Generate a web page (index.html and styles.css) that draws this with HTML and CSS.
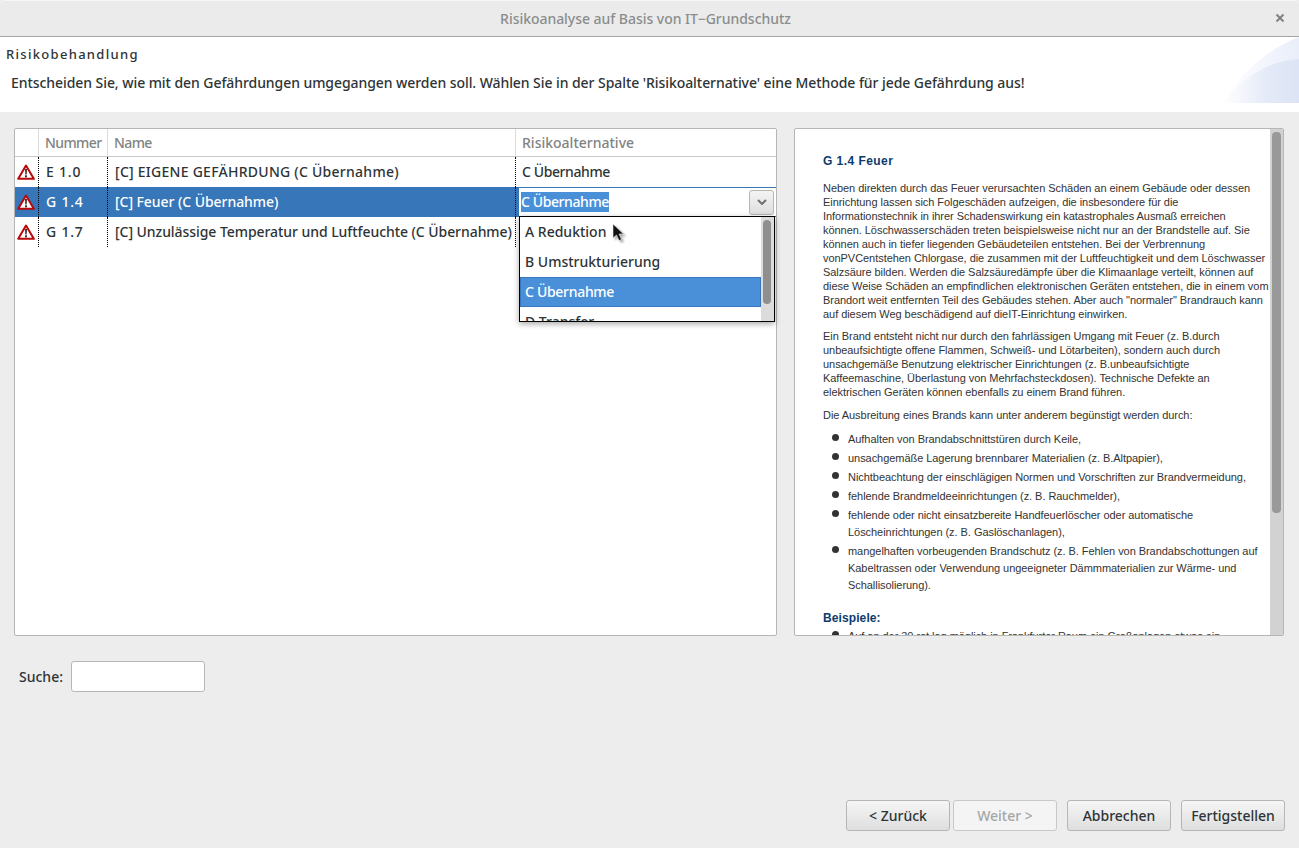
FILE: index.html
```html
<!DOCTYPE html>
<html lang="de">

<head>
    <meta charset="UTF-8">
    <title>Risikoanalyse auf Basis von IT-Grundschutz</title>
    <link rel="stylesheet" href="styles.css">
</head>

<body>
    <div class="window">
        <div class="titlebar">
            <span class="title">Risikoanalyse auf Basis von IT−Grundschutz</span>
            <svg class="close" width="10" height="10" viewBox="0 0 10 10">
                <path d="M1.5 1.5 L8.5 8.5 M8.5 1.5 L1.5 8.5" stroke="#7f8282" stroke-width="2" fill="none"/>
            </svg>
        </div>

        <div class="banner">
            <svg class="banner-art" width="76" height="66" viewBox="0 0 76 66">
                <defs>
                    <linearGradient id="fadeA" x1="0" y1="0" x2="1" y2="0">
                        <stop offset="0" stop-color="#ffffff"/>
                        <stop offset="1" stop-color="#e9eefa"/>
                    </linearGradient>
                    <linearGradient id="fadeB" x1="0" y1="0" x2="1" y2="0">
                        <stop offset="0" stop-color="#ffffff"/>
                        <stop offset="0.6" stop-color="#e3e9f7"/>
                        <stop offset="1" stop-color="#dce4f6"/>
                    </linearGradient>
                </defs>
                <path d="M0 66 C18 36 44 12 76 0 L76 66 Z" fill="url(#fadeA)"/>
                <path d="M0 66 C18 42 44 24 76 22 L76 66 Z" fill="url(#fadeB)"/>
            </svg>
            <h1>Risikobehandlung</h1>
            <p>Entscheiden Sie, wie mit den Gefährdungen umgegangen werden soll. Wählen Sie in der Spalte 'Risikoalternative' eine Methode für jede Gefährdung aus!</p>
        </div>

        <div class="panels">
            <div class="panel table-panel">
                <table class="threats">
                    <colgroup>
                        <col class="col-icon">
                        <col class="col-num">
                        <col class="col-name">
                        <col>
                    </colgroup>
                    <thead>
                        <tr>
                            <th></th>
                            <th class="tight">Nummer</th>
                            <th class="tight">Name</th>
                            <th>Risikoalternative</th>
                        </tr>
                    </thead>
                    <tbody>
                        <tr>
                            <td class="icon-cell">
                                <svg width="18" height="16" viewBox="0 0 18 16"><use href="#warn"/></svg>
                            </td>
                            <td class="num-cell">E 1.0</td>
                            <td class="caps-cell">[C] EIGENE GEFÄHRDUNG (C Übernahme)</td>
                            <td class="alt-cell">C Übernahme</td>
                        </tr>
                        <tr class="selected">
                            <td class="icon-cell">
                                <svg width="18" height="16" viewBox="0 0 18 16"><use href="#warn"/></svg>
                            </td>
                            <td class="num-cell">G 1.4</td>
                            <td>[C] Feuer (C Übernahme)</td>
                            <td class="editor-cell">
                                <div class="combo">
                                    <span class="combo-text">C Übernahme</span>
                                    <span class="combo-btn">
                                        <svg width="10" height="6" viewBox="0 0 10 6">
                                            <path d="M1 1 L5 5 L9 1" stroke="#6e7272" stroke-width="2" fill="none"/>
                                        </svg>
                                    </span>
                                </div>
                            </td>
                        </tr>
                        <tr>
                            <td class="icon-cell">
                                <svg width="18" height="16" viewBox="0 0 18 16"><use href="#warn"/></svg>
                            </td>
                            <td class="num-cell">G 1.7</td>
                            <td>[C] Unzulässige Temperatur und Luftfeuchte (C Übernahme)</td>
                            <td></td>
                        </tr>
                    </tbody>
                </table>

                <div class="dropdown">
                    <ul class="dropdown-list">
                        <li>A Reduktion</li>
                        <li>B Umstrukturierung</li>
                        <li class="current">C Übernahme</li>
                        <li>D Transfer</li>
                    </ul>
                    <div class="dropdown-scroll"><div class="dropdown-thumb"></div></div>
                </div>

                <svg class="cursor" width="14" height="20" viewBox="0 0 14 20">
                    <path d="M1 1 L1 15 L4.5 12 L7 17.5 L9.5 16.5 L7 11 L11.5 11 Z" fill="#111" stroke="#eee" stroke-width="0.6"/>
                </svg>
            </div>

            <div class="panel doc-panel">
                <div class="doc">
                    <h2>G 1.4 Feuer</h2>
                    <p>Neben direkten durch das Feuer verursachten Schäden an einem Gebäude oder dessen<br>
                    Einrichtung lassen sich Folgeschäden aufzeigen, die insbesondere für die<br>
                    Informationstechnik in ihrer Schadenswirkung ein katastrophales Ausmaß erreichen<br>
                    können. Löschwasserschäden treten beispielsweise nicht nur an der Brandstelle auf. Sie<br>
                    können auch in tiefer liegenden Gebäudeteilen entstehen. Bei der Verbrennung<br>
                    vonPVCentstehen Chlorgase, die zusammen mit der Luftfeuchtigkeit und dem Löschwasser<br>
                    Salzsäure bilden. Werden die Salzsäuredämpfe über die Klimaanlage verteilt, können auf<br>
                    diese Weise Schäden an empfindlichen elektronischen Geräten entstehen, die in einem vom<br>
                    Brandort weit entfernten Teil des Gebäudes stehen. Aber auch "normaler" Brandrauch kann<br>
                    auf diesem Weg beschädigend auf dieIT-Einrichtung einwirken.</p>
                    <p>Ein Brand entsteht nicht nur durch den fahrlässigen Umgang mit Feuer (z. B.durch<br>
                    unbeaufsichtigte offene Flammen, Schweiß- und Lötarbeiten), sondern auch durch<br>
                    unsachgemäße Benutzung elektrischer Einrichtungen (z. B.unbeaufsichtigte<br>
                    Kaffeemaschine, Überlastung von Mehrfachsteckdosen). Technische Defekte an<br>
                    elektrischen Geräten können ebenfalls zu einem Brand führen.</p>
                    <p class="lead">Die Ausbreitung eines Brands kann unter anderem begünstigt werden durch:</p>
                    <ul>
                        <li>Aufhalten von Brandabschnittstüren durch Keile,</li>
                        <li>unsachgemäße Lagerung brennbarer Materialien (z. B.Altpapier),</li>
                        <li>Nichtbeachtung der einschlägigen Normen und Vorschriften zur Brandvermeidung,</li>
                        <li>fehlende Brandmeldeeinrichtungen (z. B. Rauchmelder),</li>
                        <li>fehlende oder nicht einsatzbereite Handfeuerlöscher oder automatische<br>
                        Löscheinrichtungen (z. B. Gaslöschanlagen),</li>
                        <li>mangelhaften vorbeugenden Brandschutz (z. B. Fehlen von Brandabschottungen auf<br>
                        Kabeltrassen oder Verwendung ungeeigneter Dämmmaterialien zur Wärme- und<br>
                        Schallisolierung).</li>
                    </ul>
                    <h3>Beispiele:</h3>
                    <ul>
                        <li>Auf an der 30 rot lag möglich in Frankfurter Raum ein Großanlagen etwas ein</li>
                    </ul>
                </div>
                <div class="doc-scroll"><div class="doc-thumb"></div></div>
            </div>
        </div>

        <div class="search">
            <label for="suche">Suche:</label>
            <input type="text" id="suche">
        </div>

        <div class="buttons">
            <div class="nav-buttons">
                <button>&lt; Zurück</button>
                <button disabled>Weiter &gt;</button>
            </div>
            <button>Abbrechen</button>
            <button>Fertigstellen</button>
        </div>
    </div>

    <svg class="defs" width="0" height="0">
        <symbol id="warn" viewBox="0 0 18 16">
            <path d="M9 1.5 L16.8 14.8 L1.2 14.8 Z" fill="#fff" stroke="#b80808" stroke-width="2" stroke-linejoin="round"/>
            <path d="M8 5 H10 L9.7 10.5 H8.3 Z" fill="#4a2a2a"/>
            <rect x="8" y="11.3" width="2" height="2" fill="#4a2a2a"/>
        </symbol>
    </svg>
</body>

</html>
```

FILE: styles.css
```css
* {
    box-sizing: border-box;
}

body {
    margin: 0;
    background-color: #ededed;
    color: #2e3436;
    font-family: "Noto Sans", sans-serif;
    font-size: 14px;
}

.window {
    display: flex;
    flex-direction: column;
    height: 848px;
    overflow: hidden;
}

.defs {
    position: absolute;
}

/* title bar */
.titlebar {
    display: flex;
    align-items: center;
    justify-content: center;
    position: relative;
    height: 37px;
    padding-right: 8px;
    border-bottom: 1px solid #a5a5a5;
    border-top: 1px solid #f6f6f6;
    border-radius: 5px 5px 0 0;
    background-color: #ebebeb;
}

.title {
    color: #8a8d8d;
    font-weight: 500;
    font-size: 14px;
    letter-spacing: -0.04px;
}

.close {
    position: absolute;
    right: 14px;
    top: 12px;
}

/* white header */
.banner {
    position: relative;
    height: 75px;
    background-color: #fff;
}

.banner-art {
    position: absolute;
    right: 0;
    top: 0;
}

.banner h1 {
    margin: 0;
    padding: 8px 0 0 6px;
    font-size: 13px;
    font-weight: 500;
    line-height: 18px;
    letter-spacing: 1.3px;
}

.banner p {
    margin: 0;
    padding: 10px 0 0 11px;
    font-size: 14px;
    font-weight: 500;
    letter-spacing: -0.067px;
    line-height: 19px;
    position: relative;
}

/* the two panels */
.panels {
    display: flex;
    gap: 17px;
    padding: 16px 15px 0 14px;
}

.panel {
    position: relative;
    height: 508px;
    border: 1px solid #b6b6b3;
    border-radius: 2px;
    background-color: #fff;
}

.table-panel {
    width: 763px;
}

.doc-panel {
    display: flex;
    width: 490px;
    overflow: hidden;
}

/* table */
.threats {
    width: 761px;
    table-layout: fixed;
    border-collapse: separate;
    border-spacing: 0;
}

.col-icon {
    width: 24px;
}

.col-num {
    width: 69px;
}

.col-name {
    width: 408px;
}

.threats th {
    height: 28px;
    padding: 0 0 0 6px;
    border-right: 1px solid #dcdcdc;
    border-bottom: 1px solid #c8c8c8;
    color: #7f8383;
    font-size: 14px;
    font-weight: 500;
    text-align: left;
}

.threats .tight {
    letter-spacing: -0.6px;
}

.threats td {
    height: 30px;
    padding: 0 0 1px 7px;
    border-right: 1px dotted #000;
    font-weight: 500;
    letter-spacing: -0.06px;
    white-space: nowrap;
}

.threats td:last-child,
.threats th:last-child {
    border-right: none;
}

.threats .icon-cell {
    padding: 0 0 1px 2px;
}

.threats .num-cell {
    letter-spacing: 0.8px;
}

.threats .caps-cell {
    letter-spacing: 0.26px;
}

.threats .alt-cell {
    padding-left: 6px;
    letter-spacing: -0.4px;
}

.icon-cell svg {
    display: block;
}

.selected td {
    background-color: #3676b9;
    color: #fff;
}

.threats .editor-cell {
    padding: 1px 0 1px 3px;
    background-color: #3676b9;
}

/* combo inside the edited cell */
.combo {
    display: flex;
    align-items: center;
    justify-content: space-between;
    height: 28px;
    padding: 0 2px;
    background-color: #fff;
    color: #fff;
}

.combo-text {
    background-color: #4a90d9;
    letter-spacing: -0.4px;
    line-height: 20px;
}

.combo-btn {
    display: flex;
    align-items: center;
    justify-content: center;
    width: 25px;
    height: 25px;
    border: 1px solid #b6b6b3;
    border-radius: 3px;
    background: linear-gradient(#f4f4f4, #dedede);
}

/* popup list */
.dropdown {
    position: absolute;
    left: 504px;
    top: 87px;
    display: flex;
    width: 256px;
    height: 106px;
    border: 1px solid #000;
    background-color: #fff;
    box-shadow: 0 2px 6px rgba(0, 0, 0, 0.35);
    overflow: hidden;
}

.dropdown-list {
    flex: 1;
    margin: 0;
    padding: 0;
    list-style: none;
    font-weight: 500;
}

.dropdown-list li {
    height: 30px;
    padding-left: 5px;
    line-height: 30px;
}

.dropdown-list .current {
    border: 1px solid #3676b9;
    padding-left: 4px;
    line-height: 28px;
    background-color: #4a90d9;
    color: #fff;
    letter-spacing: -0.3px;
}

.dropdown-scroll {
    width: 13px;
    padding: 3px 3px 0 2px;
    background-color: #dcdcdc;
}

.dropdown-thumb {
    height: 84px;
    border-radius: 4px;
    background-color: #8f8f8f;
}

.cursor {
    position: absolute;
    left: 597px;
    top: 94px;
    filter: drop-shadow(2px 2px 1px rgba(0, 0, 0, 0.35));
}

/* help text on the right */
.doc {
    flex: 1;
    padding: 25px 0 0 28px;
    color: #333;
    font-family: "Liberation Sans", Arial, sans-serif;
    font-size: 11px;
    letter-spacing: -0.05px;
    line-height: 14px;
    white-space: nowrap;
    overflow: hidden;
}

.doc h2 {
    margin: 0 0 13px;
    color: #0d3b6e;
    font-size: 12px;
    font-weight: bold;
    letter-spacing: 0.45px;
    line-height: 14px;
}

.doc h3 {
    margin: 17px 0 3px;
    color: #0d3b6e;
    font-size: 12px;
    font-weight: bold;
    letter-spacing: 0.1px;
    line-height: 14px;
}

.doc p {
    margin: 0 0 8px;
}

.doc .lead {
    margin: 9px 0 9px;
}

.doc ul {
    margin: 0;
    padding: 0 0 0 25px;
    list-style: none;
}

.doc li {
    position: relative;
    margin-bottom: 2px;
    line-height: 17px;
}

.doc li::before {
    content: "";
    position: absolute;
    left: -16px;
    top: 3px;
    width: 7px;
    height: 7px;
    border-radius: 50%;
    background-color: #333;
}

.doc-scroll {
    width: 13px;
    padding: 3px 2px 0 2px;
    background-color: #d2d2d2;
    flex-shrink: 0;
}

.doc-thumb {
    height: 381px;
    border-radius: 4px;
    background-color: #999;
}

/* search row */
.search {
    display: flex;
    align-items: center;
    gap: 8px;
    margin-top: 25px;
    padding-left: 19px;
}

.search label {
    font-weight: 500;
}

.search input {
    width: 134px;
    height: 31px;
    border: 1px solid #b6b6b3;
    border-radius: 3px;
    background-color: #fff;
}

/* bottom buttons */
.buttons {
    display: flex;
    justify-content: flex-end;
    gap: 10px;
    margin-top: auto;
    padding: 0 14px 17px 0;
}

.nav-buttons {
    display: flex;
    gap: 3px;
}

button {
    width: 104px;
    height: 31px;
    padding: 0;
    border: 1px solid #b6b6b3;
    border-radius: 3px;
    background: linear-gradient(#f6f6f6, #dedede);
    color: #2e3436;
    font-family: "Noto Sans", sans-serif;
    font-size: 14px;
    font-weight: 500;
}

button:disabled {
    background: #f4f4f4;
    border-color: #c8c8c8;
    color: #a5a7a7;
}
```
